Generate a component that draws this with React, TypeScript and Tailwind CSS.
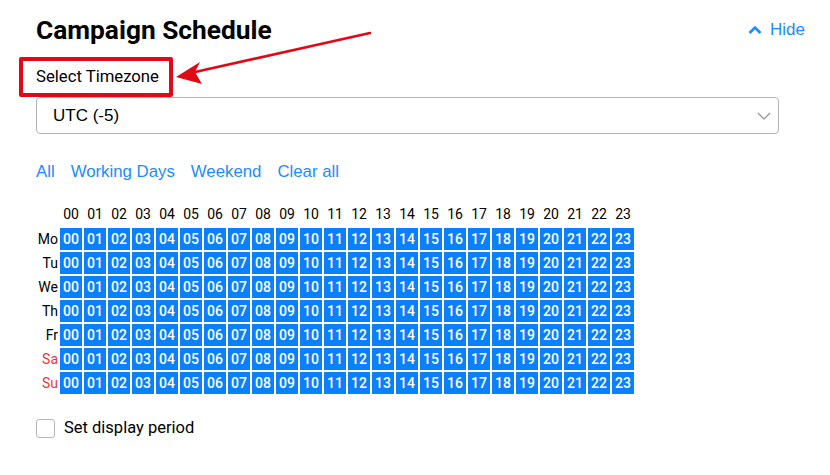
import React from "react";

const hours = Array.from({ length: 24 }, (_, i) => String(i).padStart(2, "0"));
const days = [
  { d: "Mo", red: false },
  { d: "Tu", red: false },
  { d: "We", red: false },
  { d: "Th", red: false },
  { d: "Fr", red: false },
  { d: "Sa", red: true },
  { d: "Su", red: true },
];

export default function App() {
  return (
    <div className="relative w-[830px] h-[475px] bg-white overflow-hidden font-['Roboto',sans-serif] text-black">
      <div className="pl-[36px] pr-[25px] pt-[16px]">
        <div className="flex items-center justify-between h-[28px]">
          <h1 className="text-[26.3px] font-bold leading-[28px]">Campaign Schedule</h1>
          <div className="flex items-center gap-[8px] text-[#1a8cff] font-['Liberation_Sans',sans-serif] text-[17px] leading-[20px]">
            <svg width="14" height="10" viewBox="0 0 14 10" fill="none">
              <path d="M1.5 8L7 2.5L12.5 8" stroke="#1a8cff" strokeWidth="2.6" />
            </svg>
            <span>Hide</span>
          </div>
        </div>

        <div className="mt-[13px] h-[40px] flex items-center text-[16.7px]">Select Timezone</div>

        <div className="w-[743px] h-[37px] border border-[#b4b4b4] rounded-[4px] flex items-center justify-between pl-[16px] pr-[7px] font-['Liberation_Sans',sans-serif] text-[17px]">
          <span>UTC (-5)</span>
          <svg width="14" height="8" viewBox="0 0 14 8" fill="none">
            <path d="M1 1L7 7L13 1" stroke="#9a9a9a" strokeWidth="1.4" />
          </svg>
        </div>

        <div className="mt-[28px] h-[20px] flex items-center gap-[16px] text-[#1a8cff] font-['Liberation_Sans',sans-serif] text-[16.8px] leading-[20px]">
          <span>All</span>
          <span>Working Days</span>
          <span>Weekend</span>
          <span>Clear all</span>
        </div>

        <div className="mt-[20px] grid grid-cols-[22px_repeat(24,22px)] gap-[2px] text-[14px]">
          <div className="h-[24px]" />
          {hours.map((h) => (
            <div key={h} className="h-[24px] flex items-center justify-center">
              {h}
            </div>
          ))}
          {days.map((day) => (
            <React.Fragment key={day.d}>
              <div
                className={`h-[22px] flex items-center justify-end ${day.red ? "text-[#ee3340]" : "text-black"}`}
              >
                {day.d}
              </div>
              {hours.map((h) => (
                <div
                  key={h}
                  className="h-[22px] bg-[#0a80fa] text-white font-medium flex items-center justify-center"
                >
                  {h}
                </div>
              ))}
            </React.Fragment>
          ))}
        </div>

        <div className="mt-[22px] flex items-center gap-[9px] text-[16.5px]">
          <div className="w-[19px] h-[19px] border border-[#b8b8b8] rounded-[3px] bg-white" />
          <span>Set display period</span>
        </div>
      </div>

      {/* annotation overlay */}
      <div className="absolute left-[19px] top-[57px] w-[154px] h-[40px] border-[4px] border-[#e00a14] rounded-[2px] pointer-events-none" />
      <svg className="absolute left-0 top-0 pointer-events-none" width="830" height="475">
        <line x1="370" y1="33" x2="195" y2="72" stroke="#e00a14" strokeWidth="2.6" strokeLinecap="round" />
        <polygon points="176,77 200,62 195,72 202,84" fill="#e00a14" />
      </svg>
    </div>
  );
}
